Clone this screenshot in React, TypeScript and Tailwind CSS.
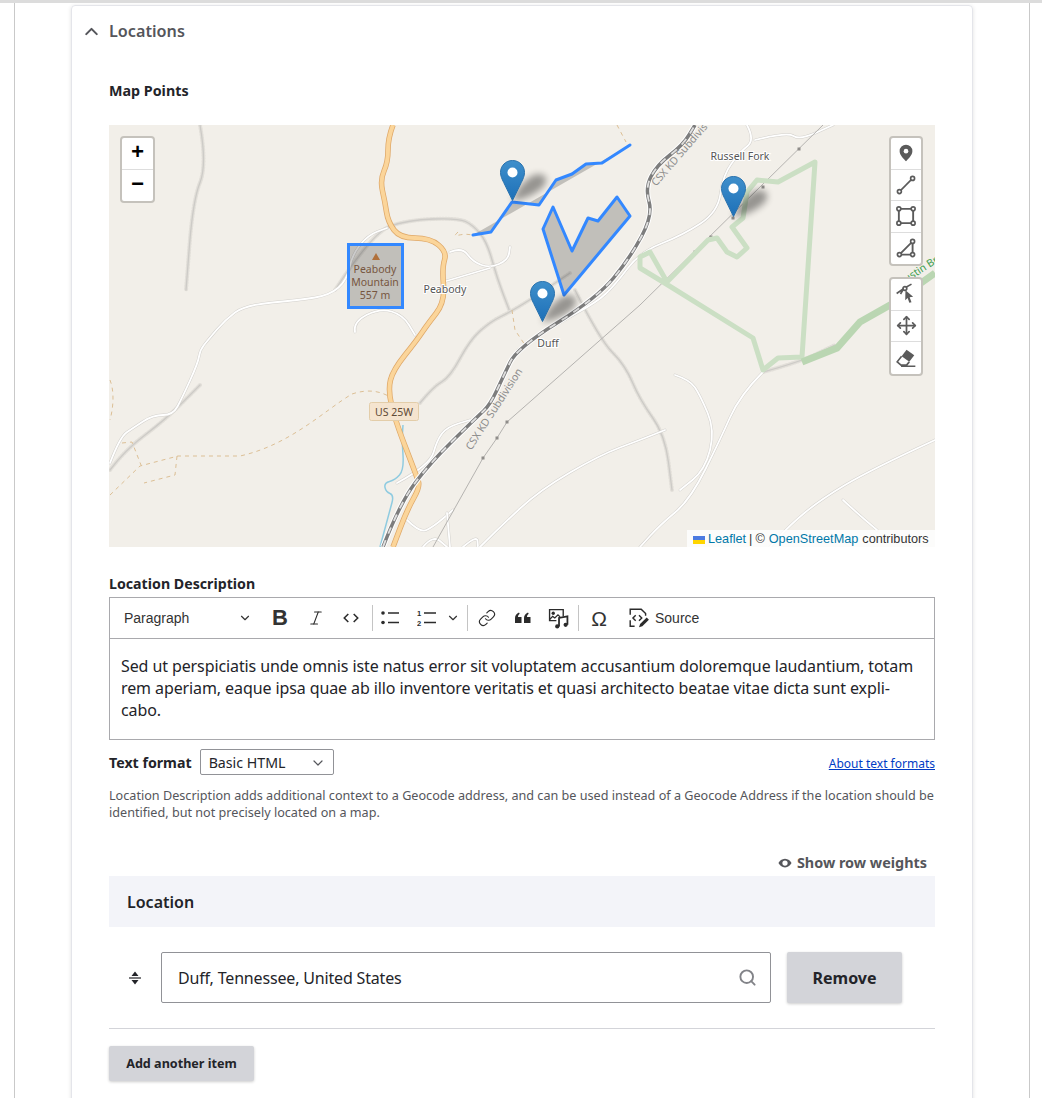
import React from 'react';
import { ChevronDown, ChevronUp, Italic, Link, Move, Search } from 'lucide-react';

const SANS = 'font-["Noto_Sans",sans-serif]';

// rounds a list of x,y points into a path through the midpoints
function smooth(pts: number[]) {
  let d = `M${pts[0]} ${pts[1]}`;
  for (let i = 2; i < pts.length - 2; i += 2) {
    const mx = (pts[i] + pts[i + 2]) / 2;
    const my = (pts[i + 1] + pts[i + 3]) / 2;
    d += ` Q${pts[i]} ${pts[i + 1]} ${mx} ${my}`;
  }
  return `${d} L${pts[pts.length - 2]} ${pts[pts.length - 1]}`;
}

// map geometry is in page pixels, the svg viewBox starts at the map's corner
const HIGHWAY = smooth([
  393, 125, 388, 138, 388, 162, 380, 180, 385, 202, 388, 222, 400, 238, 430, 238, 447, 252, 442, 268, 445, 302, 427, 325,
  417, 340, 393, 370, 388, 390, 395, 420, 417, 477, 420, 487, 407, 510, 393, 547,
]);
const RAIL = smooth([
  383, 547, 400, 503, 430, 463, 477, 417, 490, 405, 503, 377, 517, 348, 597, 298, 630, 258, 653, 215, 645, 188, 657, 165,
  683, 145, 695, 125,
]);
const POWER = 'M433 547 L483 458 L497 438 L507 422 L540 393 L640 305 L823 125';
const GREEN_A =
  'M815 162 L778 182 L757 180 L747 192 L743 218 L732 227 L747 248 L737 257 L727 252 L717 238 L708 240 L667 282 L650 252 L640 257 L640 268 L663 282 L753 338 L763 370 L778 358 L802 357 Z';
const GREEN_B = 'M802 362 L837 348 L860 322 L890 305 L935 273';
const WHITE_ROADS = [
  [747, 125, 755, 140, 740, 152, 723, 175, 718, 212, 683, 235, 640, 252, 615, 285, 597, 302, 560, 322, 518, 350],
  [755, 140, 787, 132, 800, 140, 833, 125],
  [110, 463, 120, 437, 133, 428, 153, 415, 173, 415, 182, 398, 198, 363, 200, 350, 208, 340, 225, 320, 245, 305, 300, 300, 330, 295, 347, 280, 352, 255, 368, 235, 387, 228],
  [450, 252, 462, 247, 473, 262, 490, 268, 508, 260, 510, 247],
  [443, 282, 490, 268],
  [355, 332, 353, 322, 380, 308, 403, 315, 415, 335],
  [397, 483, 430, 465, 437, 440, 447, 427, 470, 420],
  [407, 520, 420, 533, 433, 527, 453, 510],
  [447, 513, 450, 547],
  [423, 547, 433, 535, 447, 547],
  [463, 547, 477, 535, 478, 547],
  [480, 547, 500, 527, 540, 490, 600, 455, 640, 440, 665, 430],
  [675, 375, 690, 380, 700, 395, 715, 430, 705, 470, 680, 490],
  [763, 372, 740, 395, 720, 440, 690, 500, 660, 525, 640, 547],
  [935, 440, 870, 470, 820, 500, 790, 525, 770, 547],
  [843, 500, 857, 513, 877, 530],
];
const RIDGES = [
  [200, 125, 207, 165, 193, 200, 186, 290],
  [110, 470, 125, 450, 165, 420, 200, 385],
  [335, 290, 373, 232, 408, 220, 458, 218, 473, 225, 487, 242, 497, 278, 510, 312],
  [420, 403, 433, 387, 450, 377, 470, 340, 490, 322, 510, 312, 533, 298, 570, 273],
  [575, 290, 600, 340, 625, 365, 640, 400, 665, 435, 672, 490],
  [763, 372, 800, 362, 835, 345],
];
const TRAILS = [
  'M110 380 C114 390 114 405 110 420',
  'M110 495 L140 466 L178 456 L240 456 C290 445 325 410 352 394 C370 388 382 392 392 398',
  'M122 443 L132 442 L141 465',
  'M177 456 L175 475 L144 483',
  'M458 232 C450 240 460 232 472 235',
  'M512 310 L515 330 L525 345',
  'M617 125 L626 142',
];
const POINT_MARKS = [
  [483, 458],
  [497, 438],
  [507, 422],
  [695, 252],
  [711, 237],
  [733, 218],
  [763, 187],
  [799, 149],
];
const MARKERS = [
  [500, 160],
  [530, 281],
  [721, 176],
];

function MapMarker({ left, top }: { left: number; top: number }) {
  return (
    <g transform={`translate(${left} ${top})`}>
      <path d="M12 41 C16 30 24 20 34 15 C46 12 50 20 42 28 C34 35 22 40 12 41 Z" fill="#000" opacity="0.38" filter="url(#markerBlur)" />
      <path
        d="M12.5.5C5.6.5.5 5.9.5 12.5c0 3.5 1.5 6.6 3.2 10L12.5 40.5l8.8-18c1.7-3.4 3.2-6.5 3.2-10C24.5 5.9 19.4.5 12.5.5Z"
        fill="url(#markerFill)"
        stroke="#2a72ad"
      />
      <circle cx="12.5" cy="12.5" r="5" fill="#fff" />
    </g>
  );
}

function MapArt() {
  return (
    <svg viewBox="109 125 826 422" className="block h-[422px] w-[826px]">
      <defs>
        <linearGradient id="markerFill" x1="0" x2="0" y1="0" y2="1">
          <stop offset="0" stopColor="#3f8fcb" />
          <stop offset="1" stopColor="#1d70b8" />
        </linearGradient>
        <filter id="markerBlur" x="-50%" y="-50%" width="200%" height="200%">
          <feGaussianBlur stdDeviation="3.500" />
        </filter>
      </defs>
      <rect x="109" y="125" width="826" height="422" fill="#f2efe9" />
      {RIDGES.map((pts) => (
        <g key={pts.join()} fill="none" strokeLinecap="round">
          <path d={smooth(pts)} stroke="#e2dfd9" strokeWidth="4" strokeDasharray="1 2" />
          <path d={smooth(pts)} stroke="#cdcbc7" strokeWidth="1.300" />
        </g>
      ))}
      {TRAILS.map((d) => (
        <path key={d} d={d} fill="none" stroke="#dcbf95" strokeWidth="1" strokeDasharray="4 4" />
      ))}
      {WHITE_ROADS.map((pts) => (
        <g key={pts.join()} fill="none" strokeLinejoin="round" strokeLinecap="round">
          <path d={smooth(pts)} stroke="#d3d1cd" strokeWidth="2.800" />
          <path d={smooth(pts)} stroke="#fff" strokeWidth="1.800" />
        </g>
      ))}
      <path d={smooth([380, 547, 390, 510, 394, 495, 386, 492, 384, 483, 395, 480, 404, 470, 402, 440, 403, 425])} fill="none" stroke="#8fcbe0" strokeWidth="1.500" />
      <path d={POWER} fill="none" stroke="#b5b3b0" strokeWidth="1" />
      {POINT_MARKS.map(([x, y]) => (
        <rect key={x} x={x - 1.500} y={y - 1.500} width="3" height="3" fill="#8f8d8a" />
      ))}
      <path d={GREEN_A} fill="none" stroke="#cbdfc4" strokeWidth="5" strokeLinejoin="round" />
      <path d={GREEN_B} fill="none" stroke="#bad6b2" strokeWidth="7" />
      <path d={HIGHWAY} fill="none" stroke="#dfa868" strokeWidth="5.500" />
      <path d={HIGHWAY} fill="none" stroke="#fbd59a" strokeWidth="4" />
      <path d={RAIL} fill="none" stroke="#fff" strokeWidth="5.500" />
      <path d={RAIL} fill="none" stroke="#7d7d7d" strokeWidth="3.500" />
      <path d={RAIL} fill="none" stroke="#e0e0e0" strokeWidth="1.800" strokeDasharray="7 7" />

      <g className={SANS} fontSize="10.500" textAnchor="middle" stroke="#fff" strokeWidth="2" paintOrder="stroke" fill="#555">
        <text x="445" y="293">Peabody</text>
        <text x="548" y="347">Duff</text>
        <text x="740" y="160">Russell Fork</text>
      </g>
      <g className={SANS} fontSize="10.500" textAnchor="middle" fill="#8d8d8d">
        <text transform="translate(682 157) rotate(-49)">CSX KD Subdivis</text>
        <text transform="translate(497 411) rotate(-57)">CSX KD Subdivision</text>
      </g>
      <text transform="translate(920 274) rotate(-33)" className={SANS} fontSize="10.500" textAnchor="middle" fill="#3f9e50">
        Austin Br
      </text>

      <rect x="369.500" y="402.500" width="49" height="18" rx="2" fill="#f5e4cf" stroke="#e3cda9" />
      <text x="394" y="416" className={SANS} fontSize="10.500" textAnchor="middle" fill="#5f4a36">
        US 25W
      </text>

      <path d="M473 235 L491 232 L512 202 L539 205 L556 180 L572 174 L586 164 L602 163 L630 145" fill="#000" fillOpacity="0.2" stroke="#3388ff" strokeWidth="3" strokeLinecap="round" strokeLinejoin="round" />
      <path d="M553 207 L572 251 L588 218 L598 221 L617 197 L630 216 L564 295 L543 229 Z" fill="#000" fillOpacity="0.2" stroke="#3388ff" strokeWidth="3" strokeLinejoin="round" />
      <rect x="348.500" y="244.500" width="54" height="63" fill="#000" fillOpacity="0.2" stroke="#3388ff" strokeWidth="3" />
      <path d="M376 253 L380 260 L372 260 Z" fill="#b0703a" />
      <g className={SANS} fontSize="10.500" textAnchor="middle" fill="#77563f">
        <text x="375" y="273">Peabody</text>
        <text x="375" y="286">Mountain</text>
        <text x="375" y="299">557 m</text>
      </g>

      {MARKERS.map(([left, top]) => (
        <MapMarker key={left} left={left} top={top} />
      ))}
    </svg>
  );
}

function DrawTool({ children, last }: { children: React.ReactNode; last?: boolean }) {
  return (
    <div className={`flex h-[31.500px] items-center justify-center ${last ? '' : 'border-b border-[#dddddd]'}`}>
      <svg viewBox="0 0 20 20" className="h-[22px] w-[22px] text-[#5b5b5b]" fill="none" stroke="currentColor" strokeWidth="1.500">
        {children}
      </svg>
    </div>
  );
}

function Dots({ points }: { points: number[][] }) {
  return (
    <>
      {points.map(([cx, cy]) => (
        <circle key={`${cx}-${cy}`} cx={cx} cy={cy} r="1.800" fill="#fff" />
      ))}
    </>
  );
}

function MapControls() {
  return (
    <>
      <div className="absolute left-[11px] top-[11px] w-[35px] rounded border-2 border-[#c5c2bc] bg-white font-['Liberation_Mono',monospace] text-[22px] font-bold text-black">
        <div className="flex h-[32px] items-center justify-center border-b border-[#dddddd]">+</div>
        <div className="flex h-[31px] items-center justify-center">−</div>
      </div>
      <div className="absolute right-[12px] top-[11px] flex w-[34px] flex-col gap-[11px]">
        <div className="rounded border-2 border-[#c5c2bc] bg-white">
          <DrawTool>
            <path d="M10 2.500a5.800 5.800 0 0 0-5.800 5.800c0 3.600 4 7 5.800 9.200 1.800-2.200 5.800-5.600 5.800-9.200A5.800 5.800 0 0 0 10 2.500Z" fill="currentColor" stroke="none" />
            <circle cx="10" cy="8.300" r="2.100" fill="#fff" stroke="none" />
          </DrawTool>
          <DrawTool>
            <path d="M4.500 15.500 15.500 4.500" />
            <Dots points={[[4, 16], [16, 4]]} />
          </DrawTool>
          <DrawTool>
            <path d="M3.500 3.500h13v13h-13Z" strokeWidth="1.700" />
            <Dots points={[[3.500, 3.500], [16.500, 3.500], [3.500, 16.500], [16.500, 16.500]]} />
          </DrawTool>
          <DrawTool last>
            <path d="M4 16 16 4v12Z" strokeWidth="1.700" />
            <Dots points={[[4, 16], [16, 16], [16, 4]]} />
          </DrawTool>
        </div>
        <div className="rounded border-2 border-[#c5c2bc] bg-white">
          <DrawTool>
            <path d="M1.500 9.500 8 5l7-4M8 5l-3 5" />
            <circle cx="9" cy="5" r="1.700" fill="#fff" />
            <path d="m9.500 6.500 7 6-3.200.5 1.700 4.500-2 .5-1.500-4.300-2.200 2Z" fill="currentColor" stroke="none" />
          </DrawTool>
          <div className="flex h-[31.500px] items-center justify-center border-b border-[#dddddd]">
            <Move size={21} strokeWidth={2} className="text-[#5b5b5b]" />
          </div>
          <DrawTool last>
            <path d="m10.500 2.500 7 5-4.500 6-7-5Z" fill="currentColor" stroke="none" />
            <path d="m6 8.500-4 5 3.500 3h5l2.500-3M5.500 17.500h13" />
          </DrawTool>
        </div>
      </div>
    </>
  );
}

function EditorIcon({ children, size = 20 }: { children: React.ReactNode; size?: number }) {
  return (
    <svg viewBox="0 0 20 20" width={size} height={size} fill="none" stroke="#2b2b2b" strokeWidth="1.500" className="shrink-0">
      {children}
    </svg>
  );
}

function Slot({ width, children }: { width: string; children: React.ReactNode }) {
  return <span className={`flex shrink-0 items-center justify-center ${width}`}>{children}</span>;
}

function Sep({ className }: { className: string }) {
  return <span className={`h-[26px] w-px shrink-0 bg-[#c4c4c4] ${className}`} />;
}

function EditorToolbar() {
  return (
    <div className="flex h-[42px] items-center border border-[#a9a9ad] pl-[14px] font-['Liberation_Sans',sans-serif] text-[14px] text-[#333333]">
      <span className="w-[114px]">Paragraph</span>
      <ChevronDown size={14} strokeWidth={2} className="shrink-0 text-[#333333]" />
      <Slot width="ml-[11px] w-[34px]">
        <span className="text-[22px] font-bold leading-none">B</span>
      </Slot>
      <Slot width="ml-[2px] w-[34px]">
        <Italic size={18} strokeWidth={1.400} className="text-[#2b2b2b]" />
      </Slot>
      <Slot width="ml-[1px] w-[34px]">
        <EditorIcon size={18}>
          <path d="M7 5.500 2.500 10 7 14.500M13 5.500l4.500 4.500-4.500 4.500" strokeWidth="1.700" />
        </EditorIcon>
      </Slot>
      <Sep className="ml-[4px]" />
      <Slot width="ml-[3px] w-[28px]">
        <EditorIcon>
          <circle cx="3" cy="5" r="1.800" fill="#2b2b2b" stroke="none" />
          <circle cx="3" cy="14.500" r="1.800" fill="#2b2b2b" stroke="none" />
          <path d="M8 5h11M8 14.500h11" />
        </EditorIcon>
      </Slot>
      <Slot width="ml-[9px] w-[28px]">
        <EditorIcon>
          <text x="0" y="8" fontSize="7.500" fontWeight="700" fill="#2b2b2b" stroke="none" fontFamily="Liberation Sans">1</text>
          <text x="0" y="17.500" fontSize="7.500" fontWeight="700" fill="#2b2b2b" stroke="none" fontFamily="Liberation Sans">2</text>
          <path d="M7 5h12M7 14.500h12" />
        </EditorIcon>
      </Slot>
      <ChevronDown size={14} strokeWidth={2} className="ml-[5px] shrink-0 text-[#333333]" />
      <Sep className="ml-[7px]" />
      <Slot width="ml-[2px] w-[34px]">
        <Link size={18} strokeWidth={1.500} className="text-[#2b2b2b]" />
      </Slot>
      <Slot width="ml-[2px] w-[34px]">
        <EditorIcon size={20}>
          <path d="M2 15V10c0-2.500 1.500-4.500 4-5.500l.700 1.200C5.500 6.500 5 7.500 5 9h3.500v6ZM11 15V10c0-2.500 1.500-4.500 4-5.500l.700 1.200C14.500 6.500 14 7.500 14 9h3.500v6Z" fill="#2b2b2b" stroke="none" />
        </EditorIcon>
      </Slot>
      <Slot width="ml-[1px] w-[34px]">
        <EditorIcon size={21}>
          <path d="M8 12H1.500V1.500h13V8" strokeWidth="1.300" />
          <circle cx="5" cy="5" r="1.600" fill="#2b2b2b" stroke="none" />
          <path d="m1.500 11 3-3 2 1.500 3-3 2 2" strokeWidth="1.200" />
          <path d="M10.500 17.500V9.500l8-1.500v8" strokeWidth="1.700" />
          <circle cx="8.800" cy="17.500" r="2" fill="#2b2b2b" stroke="none" />
          <circle cx="16.800" cy="16" r="2" fill="#2b2b2b" stroke="none" />
        </EditorIcon>
      </Slot>
      <Sep className="ml-[3px]" />
      <Slot width="ml-[3px] w-[34px]">
        <span className="text-[21px] leading-none">Ω</span>
      </Slot>
      <span className="ml-[12px] mr-[5px]">
        <EditorIcon size={22}>
          <path d="M2 7V2h10l4 4v2M2 12v5.500h4" strokeWidth="1.300" />
          <path d="M7 7.500 4.500 10 7 12.500M10 7.500l2.500 2.500L10 12.500" strokeWidth="1.300" />
          <path d="m10 18.500 1-3 6-6 2 2-6 6Z" fill="#2b2b2b" stroke="none" />
        </EditorIcon>
      </span>
      <span>Source</span>
    </div>
  );
}

export default function App() {
  return (
    <div className={`h-[1098px] w-[1042px] overflow-hidden border-t-[3px] border-[#dcdcdc] bg-white ${SANS}`}>
      <div className="ml-[14px] h-full w-[1016px] border-x border-[#c9c9c9] pt-[2px]">
        <div className="mx-[56px] h-[1200px] rounded border border-[#e4e5ea] px-[37px] shadow-[0_1px_4px_rgba(0,0,0,0.12)]">
          <div className="relative flex h-[50px] items-center text-[16.200px] font-semibold text-[#55565b]">
            <ChevronUp size={21} strokeWidth={2.400} className="absolute left-[-28px]" />
            Locations
          </div>

          <div className="mt-[25px] text-[14.300px] font-bold leading-[20px] text-[#232429]">Map Points</div>

          <div className="relative mt-[24px] h-[422px] w-[826px] overflow-hidden">
            <MapArt />
            <MapControls />
            <div className="absolute bottom-0 right-0 flex h-[17px] w-[248px] items-center gap-[3px] whitespace-nowrap bg-white/80 pl-[6px] pt-[2px] font-['Liberation_Sans',sans-serif] text-[12.700px] text-[#333333]">
              <svg viewBox="0 0 12 8" width="12" height="8" className="shrink-0">
                <rect width="12" height="4" fill="#4C7BE1" />
                <rect y="4" width="12" height="4" fill="#FFD500" />
              </svg>
              <span className="text-[#0078A8]">Leaflet</span>
              <span>|</span>
              <span>©</span>
              <span className="ml-[1px] text-[#0078A8]">OpenStreetMap</span>
              <span className="ml-[1px]">contributors</span>
            </div>
          </div>

          <div className="mt-[27px] text-[14.200px] font-bold leading-[20px] text-[#232429]">Location Description</div>

          <div className="mt-[3px]">
            <EditorToolbar />
            <div className="h-[101px] border border-t-0 border-[#a9a9ad] px-[11px] pt-[16px] text-[16px] leading-[22px] tracking-[-0.1px] text-[#232429]">
              Sed ut perspiciatis unde omnis iste natus error sit voluptatem accusantium doloremque laudantium, totam rem aperiam, eaque ipsa quae ab illo inventore veritatis et quasi architecto beatae vitae dicta sunt expli-
              <br />
              cabo.
            </div>
          </div>

          <div className="mt-[9px] flex h-[26px] items-center">
            <span className="pt-[1px] text-[14.200px] font-bold text-[#232429]">Text format</span>
            <div className="ml-[8px] flex h-[26px] w-[134px] items-center justify-between rounded-[2px] border border-[#919297] pl-[8px] pr-[7px] pt-[1px] text-[14.200px] text-[#232429]">
              Basic HTML
              <ChevronDown size={16} strokeWidth={1.800} className="text-[#55565b]" />
            </div>
            <a className="ml-auto pt-[3px] text-[12px] text-[#003cc5] underline">About text formats</a>
          </div>

          <p className="mt-[12px] text-[12.640px] leading-[17px] text-[#55565b]">
            Location Description adds additional context to a Geocode address, and can be used instead of a Geocode Address if the location should be identified, but not precisely located on a map.
          </p>

          <div className="mt-[33px] flex h-[18px] items-center justify-end pr-[8px] text-[14.400px] font-bold text-[#55565b]">
            <svg viewBox="0 0 16 16" width="14" height="14" className="mr-[5px]">
              <path d="M8 3C4.500 3 1.700 5.500.500 8c1.200 2.500 4 5 7.500 5s6.300-2.500 7.500-5C14.300 5.500 11.500 3 8 3Zm0 8a3 3 0 1 1 0-6 3 3 0 0 1 0 6Z" fill="#55565b" />
            </svg>
            Show row weights
          </div>

          <div className="mt-[4px] flex h-[51px] items-center bg-[#f3f4f9] pl-[18px] text-[16px] font-semibold text-[#232429]">Location</div>

          <div className="mt-[25px] flex h-[51px] items-center">
            <div className="flex w-[52px] justify-center">
              <svg viewBox="0 0 14 16" width="14" height="16">
                <path d="M7 1.500 10.500 6h-7ZM7 14.500 3.500 10h7Z" fill="#232429" />
                <path d="M1 8h12" stroke="#232429" strokeWidth="1.200" />
              </svg>
            </div>
            <div className="flex h-[51px] w-[610px] items-center justify-between rounded-[2px] border border-[#919297] pl-[16px] pr-[13px] text-[16px] tracking-[-0.17px] text-[#232429]">
              Duff, Tennessee, United States
              <Search size={19} strokeWidth={2.400} className="text-[#828388]" />
            </div>
            <button type="button" className="ml-[16px] h-[51px] w-[115px] rounded-[2px] bg-[#d3d4d9] text-[16px] font-bold text-[#232429] shadow-[0_1px_3px_rgba(0,0,0,0.2)]">
              Remove
            </button>
          </div>

          <div className="mt-[25px] border-t border-[#d3d4d9]" />

          <button type="button" className="mt-[17px] block h-[35px] w-[145px] rounded-[2px] bg-[#d3d4d9] pt-[2px] text-[12.600px] font-bold text-[#232429] shadow-[0_1px_3px_rgba(0,0,0,0.2)]">
            Add another item
          </button>
        </div>
      </div>
    </div>
  );
}
